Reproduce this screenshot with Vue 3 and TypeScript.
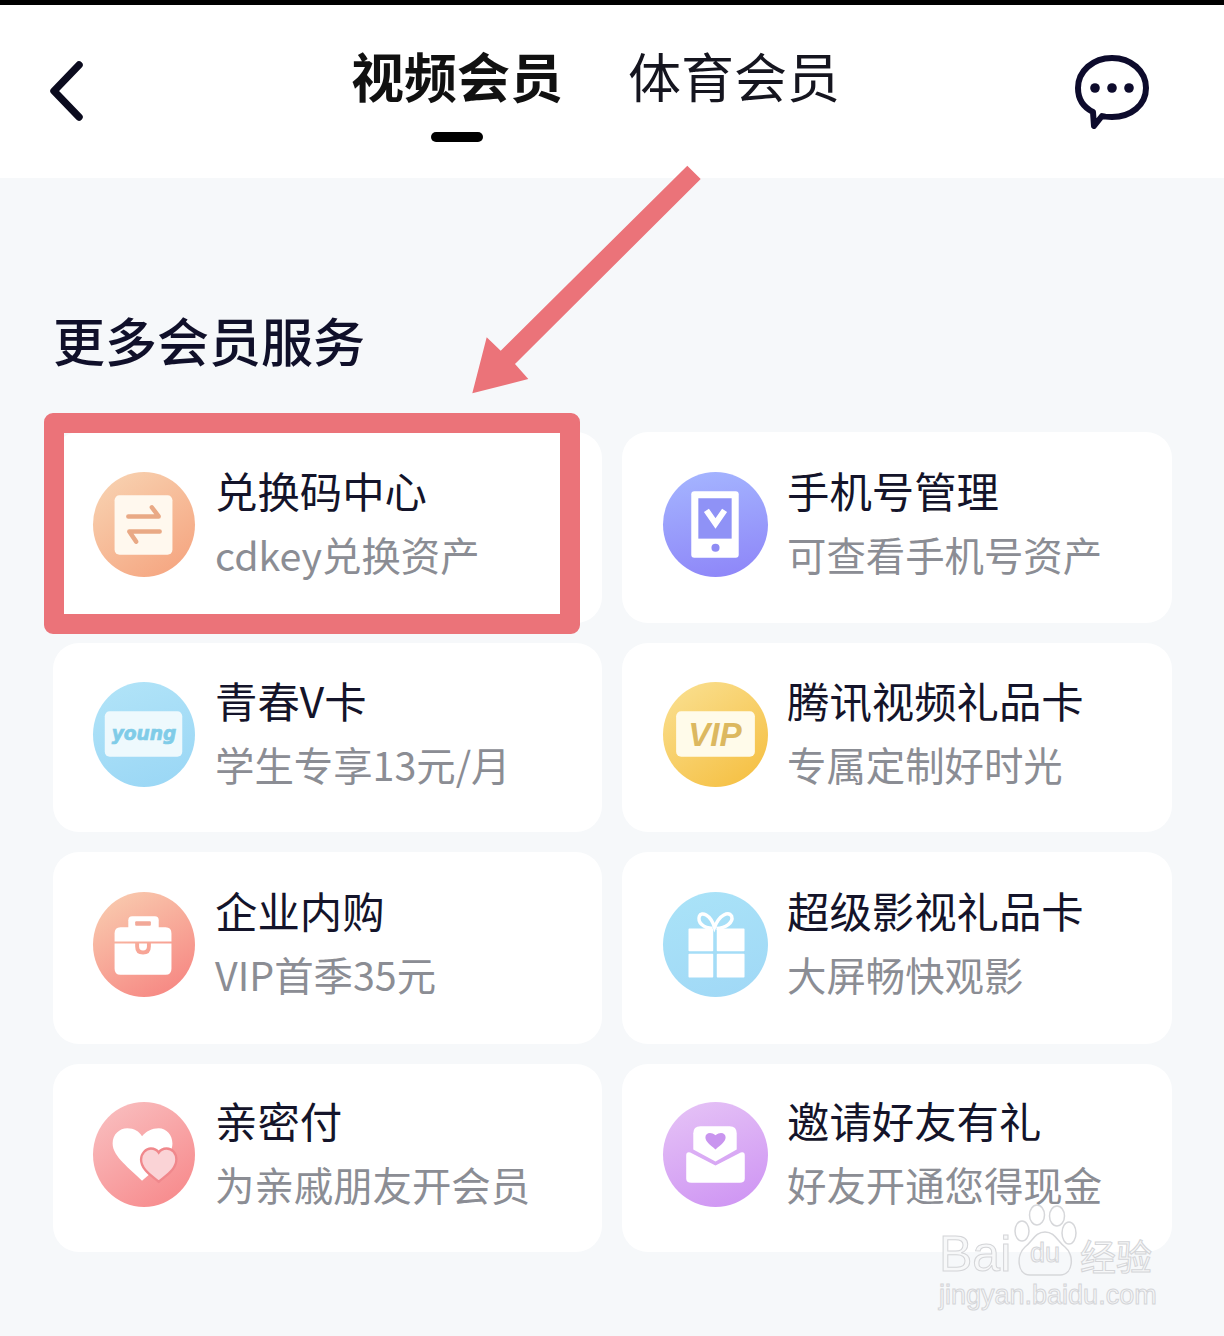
<script setup lang="ts">
interface Service {
  title: string
  desc: string
  kind: string
}

const services: Service[] = [
  { title: '兑换码中心', desc: 'cdkey兑换资产', kind: 'exchange' },
  { title: '手机号管理', desc: '可查看手机号资产', kind: 'phone' },
  { title: '青春V卡', desc: '学生专享13元/月', kind: 'young' },
  { title: '腾讯视频礼品卡', desc: '专属定制好时光', kind: 'vip' },
  { title: '企业内购', desc: 'VIP首季35元', kind: 'case' },
  { title: '超级影视礼品卡', desc: '大屏畅快观影', kind: 'gift' },
  { title: '亲密付', desc: '为亲戚朋友开会员', kind: 'heart' },
  { title: '邀请好友有礼', desc: '好友开通您得现金', kind: 'mail' },
]
</script>

<template>
  <div class="page">
    <header class="header">
      <svg class="back" viewBox="0 0 36 60" aria-hidden="true">
        <path d="M31 4 L6 30 L31 56" fill="none" stroke="#0b0b1e" stroke-width="7.5" stroke-linecap="round" stroke-linejoin="round" />
      </svg>
      <nav class="tabs">
        <div class="tab active">
          <span>视频会员</span>
          <i class="bar"></i>
        </div>
        <div class="tab"><span>体育会员</span></div>
      </nav>
      <svg class="chat" viewBox="0 0 74 74" aria-hidden="true">
        <path d="M37 3 C56 3 71 16 71 33 C71 50 56 62 37 62 C33 62 30 62 27 61 L19 71 L18 57 C8 52 3 43 3 33 C3 16 18 3 37 3 Z" fill="none" stroke="#0d0b2c" stroke-width="6" stroke-linejoin="round" />
        <circle cx="20" cy="33" r="4.8" fill="#0d0b2c" />
        <circle cx="37" cy="33" r="4.8" fill="#0d0b2c" />
        <circle cx="54" cy="33" r="4.8" fill="#0d0b2c" />
      </svg>
    </header>

    <main class="main">
      <h2 class="section-title">更多会员服务</h2>
      <div class="grid">
        <div v-for="s in services" :key="s.kind" class="card">
          <div class="icon" :class="'icon-' + s.kind">
            <svg viewBox="0 0 104 104" preserveAspectRatio="none" aria-hidden="true">
              <template v-if="s.kind === 'exchange'">
                <rect x="22" y="23" width="59" height="59" rx="5" fill="#fff8ee" />
                <path d="M36 44 H67 L60 35 M68 59 H37 L44 69" fill="none" stroke="#e9a985" stroke-width="4.5" stroke-linecap="round" stroke-linejoin="round" />
              </template>
              <template v-else-if="s.kind === 'phone'">
                <rect x="28" y="19" width="47" height="66" rx="3" fill="#fff" />
                <rect x="35" y="26" width="33" height="40" fill="#8f92f6" />
                <path d="M43 38 L52 51 L61 38" fill="none" stroke="#fff" stroke-width="6" />
                <circle cx="52" cy="75" r="4" fill="#8f8cf4" />
              </template>
              <template v-else-if="s.kind === 'young'">
                <rect x="12" y="29" width="79" height="45" rx="5" fill="#eef9fd" />
                <text x="19" y="57" class="icon-word young-word" textLength="66" lengthAdjust="spacingAndGlyphs">young</text>
              </template>
              <template v-else-if="s.kind === 'vip'">
                <rect x="13" y="29" width="78" height="45" rx="5" fill="#fffbea" />
                <text x="25" y="63" class="icon-word vip-word" textLength="53" lengthAdjust="spacingAndGlyphs">VIP</text>
              </template>
              <template v-else-if="s.kind === 'case'">
                <path d="M36 38 V28 Q36 24 40 24 H63 Q67 24 67 28 V38 Z" fill="#fff" />
                <rect x="43" y="29" width="16" height="4.5" rx="1" fill="#f2a898" />
                <path d="M22 49 V41 Q22 35 28 35 H74 Q80 35 80 41 V49 H60 V49 H43 Z" fill="#fff" />
                <path d="M22 51 H43 V54 Q43 62 51 62 Q59 62 59 54 V51 H80 V76 Q80 82 74 82 H28 Q22 82 22 76 Z" fill="#fff" />
                <path d="M47 51 H55 V54 Q55 58 51 58 Q47 58 47 54 Z" fill="#fff" />
              </template>
              <template v-else-if="s.kind === 'gift'">
                <path d="M49 36 C40 36 34 30 36 24 C38 19 47 22 51 35 C56 22 65 19 68 24 C70 30 62 36 53 36" fill="none" stroke="#fff" stroke-width="3.4" />
                <path d="M26 37 H49 V58 H26 Z M54 37 H80 V58 H54 Z M26 62 H49 V84 H26 Z M54 62 H80 V84 H54 Z" fill="#fff" stroke="#fff" stroke-width="1.5" stroke-linejoin="round" />
              </template>
              <template v-else-if="s.kind === 'heart'">
                <path d="M50 78 C38 66 20 54 20 41 C20 32 27 26 35 26 C42 26 47 29 50 34 C54 29 60 26 67 26 C75 26 81 33 81 41 C81 54 64 66 50 78 Z" fill="#fff" />
                <path d="M67 79 C60 73 49 67 49 57 C49 51 54 46 59 46 C63 46 65 47 67 50 C69 47 72 46 75 46 C81 46 85 51 85 57 C85 67 74 73 67 79 Z" fill="#fad3d6" stroke="#f0888c" stroke-width="2.4" />
              </template>
              <template v-else>
                <path d="M30 47 V31 Q30 24 37 24 H66 Q73 24 73 31 V47 L52 59 Z" fill="#fff" />
                <path d="M52 47 C46 42 42 39 42 35 C42 31 47 29 52 33 C57 29 62 31 62 35 C62 39 58 42 52 47 Z" fill="#c995ef" />
                <path d="M23 53 Q23 49 27 50 L52 63 L77 50 Q81 49 81 53 V76 Q81 80 76 80 H28 Q23 80 23 76 Z" fill="#fff" />
              </template>
            </svg>
          </div>
          <div class="text">
            <div class="title">{{ s.title }}</div>
            <div class="desc">{{ s.desc }}</div>
          </div>
        </div>
      </div>
    </main>

    <div class="highlight"></div>
    <svg class="arrow" viewBox="0 0 240 240" aria-hidden="true">
      <polygon points="225.3,5.7 238.7,19 53,204 66.3,219 10.3,233.3 24.7,177.3 38.7,190.7" fill="#eb7379" />
    </svg>

    <div class="watermark">
      <div class="wm-top">
        <span class="wm-bai">Bai</span>
        <svg class="wm-paw" viewBox="0 0 64 80" aria-hidden="true">
          <g fill="none" stroke="#d6d7da" stroke-width="1.5">
            <ellipse cx="9" cy="28" rx="7" ry="10" />
            <ellipse cx="24" cy="12" rx="7.5" ry="10" />
            <ellipse cx="44" cy="13" rx="7.5" ry="10" />
            <ellipse cx="56" cy="30" rx="7" ry="11" />
            <path d="M32 29 C42 29 44 38 52 44 C62 52 60 72 47 72 C38 72 26 72 17 72 C4 72 3 52 12 44 C20 38 22 29 32 29 Z" />
          </g>
        </svg>
        <span class="wm-du">du</span>
        <span class="wm-cn">经验</span>
      </div>
      <div class="wm-url">jingyan.baidu.com</div>
    </div>
  </div>
</template>

<style scoped>
.page {
  position: relative;
  width: 1224px;
  height: 1336px;
  overflow: hidden;
  background: #f6f8fa;
  border-top: 5px solid #000;
  box-sizing: border-box;
  font-family: "Noto Sans CJK SC", "Noto Sans", sans-serif;
}

.header {
  position: relative;
  height: 173px;
  background: #fff;
}

.back {
  position: absolute;
  left: 48px;
  top: 56px;
  width: 36px;
  height: 60px;
}

.chat {
  position: absolute;
  left: 1075px;
  top: 50px;
  width: 74px;
  height: 74px;
}

.tabs {
  display: flex;
  gap: 65px;
  padding-left: 351px;
  padding-top: 35px;
}

.tab {
  display: flex;
  flex-direction: column;
  align-items: center;
  font-size: 53px;
  line-height: 70px;
  color: #15151f;
  font-weight: 400;
}

.tab.active {
  font-weight: 700;
  color: #111;
}

.bar {
  width: 52px;
  height: 10px;
  margin-top: 22px;
  border-radius: 5px;
  background: #000;
}

.main {
  padding: 132px 52px 0 53px;
}

.section-title {
  margin: 0 0 62px;
  font-size: 52px;
  line-height: 60px;
  font-weight: 500;
  color: #10102a;
}

.grid {
  display: grid;
  grid-template-columns: 549px 550px;
  grid-template-rows: 191px 189px 192px 188px;
  column-gap: 20px;
  row-gap: 20px;
}

.card {
  display: flex;
  align-items: center;
  gap: 20px;
  padding: 0 0 7px 40px;
  border-radius: 26px;
  background: #fff;
  box-sizing: border-box;
}

.card:nth-child(even) {
  gap: 19px;
  padding-left: 41px;
}

.card:nth-child(even) .icon {
  width: 105px;
}

.icon {
  width: 102px;
  height: 105px;
  flex: none;
  border-radius: 50%;
}

.icon svg {
  display: block;
  width: 100%;
  height: 100%;
}

.text {
  padding-bottom: 5px;
}

.icon-exchange { background: linear-gradient(145deg, #f8d5b4, #f5a17c); }
.icon-phone { background: linear-gradient(170deg, #a5b6ff, #8d84f8); }
.icon-young { background: linear-gradient(160deg, #b2e4f8, #99d6f5); }
.icon-vip { background: linear-gradient(145deg, #fae194, #f5bd3c); }
.icon-case { background: linear-gradient(150deg, #f9d0b2, #f6807e); }
.icon-gift { background: linear-gradient(160deg, #aae3f8, #a0d8f6); }
.icon-heart { background: linear-gradient(145deg, #f9c2c3, #f78587); }
.icon-mail { background: linear-gradient(160deg, #e6c4f6, #cd92f3); }

.icon-word {
  font-weight: 700;
  font-style: italic;
}

.young-word {
  font-family: "DejaVu Sans", sans-serif;
  font-size: 19px;
  fill: #80cce8;
  stroke: #80cce8;
  stroke-width: 0.7;
}

.vip-word {
  font-family: "Liberation Sans", sans-serif;
  font-size: 32px;
  fill: #dcb860;
}

.title {
  font-size: 42.4px;
  line-height: 64px;
  color: #14142a;
  white-space: nowrap;
}

.desc {
  font-size: 39.4px;
  line-height: 64px;
  color: #8b8d94;
  white-space: nowrap;
}

.highlight {
  position: absolute;
  left: 44px;
  top: 408px;
  width: 536px;
  height: 221px;
  box-sizing: border-box;
  border: 20px solid #eb7379;
  border-radius: 9px;
}

.arrow {
  position: absolute;
  left: 462px;
  top: 155px;
  width: 240px;
  height: 240px;
}

.watermark {
  position: absolute;
  left: 939px;
  top: 1196px;
  width: 220px;
  color: #f7f8f9;
  font-family: "Liberation Sans", sans-serif;
  -webkit-text-stroke: 1px #d4d5d8;
}

.wm-top {
  position: relative;
  height: 78px;
}

.wm-bai {
  position: absolute;
  left: 0;
  top: 25px;
  font-size: 50px;
  line-height: 56px;
}

.wm-paw {
  position: absolute;
  left: 74px;
  top: 2px;
  width: 64px;
  height: 80px;
}

.wm-du {
  position: absolute;
  left: 91px;
  top: 36px;
  font-size: 27px;
  line-height: 32px;
}

.wm-cn {
  position: absolute;
  left: 141px;
  top: 32px;
  font-family: "Noto Sans CJK SC", sans-serif;
  font-size: 36px;
  line-height: 44px;
  white-space: nowrap;
}

.wm-url {
  font-size: 27px;
  line-height: 32px;
  white-space: nowrap;
}
</style>

<style>
html, body {
  margin: 0;
  background: #f6f8fa;
}
</style>
